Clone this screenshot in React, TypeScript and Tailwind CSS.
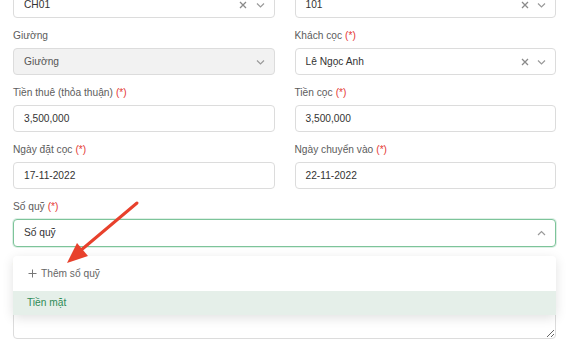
import React from "react";

const font = { fontFamily: '"Liberation Sans", Arial, sans-serif' };

function Chevron({ up = false }: { up?: boolean }) {
  return (
    <svg width="9" height="6" viewBox="0 0 9 6" className="text-[#9a9a9a]">
      <path
        d={up ? "M1 5 L4.5 1.5 L8 5" : "M1 1.5 L4.5 5 L8 1.5"}
        fill="none"
        stroke="currentColor"
        strokeWidth="1.2"
      />
    </svg>
  );
}

function Clear() {
  return (
    <svg width="8" height="8" viewBox="0 0 8 8" className="text-[#8a8a8a]">
      <path d="M1 1 L7 7 M7 1 L1 7" stroke="currentColor" strokeWidth="1.3" />
    </svg>
  );
}

function Label({ text, required }: { text: string; required?: boolean }) {
  return (
    <div className="mb-[5px] h-[14px] text-[10.2px] leading-[14px] text-[#5c5c5c]">
      {text}
      {required && <span className="ml-[3px] text-[#e53935]">(*)</span>}
    </div>
  );
}

function Select({
  value,
  clearable,
  disabled,
}: {
  value: string;
  clearable?: boolean;
  disabled?: boolean;
}) {
  return (
    <div
      className={`flex h-[27px] items-center rounded-[4px] border border-[#dcdcdc] pl-[10px] pr-[5px] text-[10.2px] ${
        disabled ? "bg-[#f2f2f2] text-[#555]" : "bg-white text-[#333]"
      }`}
    >
      <span className="flex-1">{value}</span>
      {clearable && (
        <span className="flex w-[17px] justify-center">
          <Clear />
        </span>
      )}
      <span className="flex w-[17px] justify-center">
        <Chevron />
      </span>
    </div>
  );
}

function Input({ value }: { value: string }) {
  return (
    <div className="flex h-[27px] items-center rounded-[4px] border border-[#dcdcdc] bg-white pl-[10px] text-[10.2px] text-[#333]">
      {value}
    </div>
  );
}

export default function App() {
  return (
    <div className="relative h-[340px] w-[570px] overflow-hidden bg-white" style={font}>
      <div className="-mt-[9px] px-[13px] pr-[14px]">
        <div className="grid grid-cols-2 gap-x-[20px] gap-y-[11px]">
          <div>
            <Select value="CH01" clearable />
          </div>
          <div>
            <Select value="101" clearable />
          </div>
          <div>
            <Label text="Giường" />
            <Select value="Giường" disabled />
          </div>
          <div>
            <Label text="Khách cọc" required />
            <Select value="Lê Ngọc Anh" clearable />
          </div>
          <div>
            <Label text="Tiền thuê (thỏa thuận)" required />
            <Input value="3,500,000" />
          </div>
          <div>
            <Label text="Tiền cọc" required />
            <Input value="3,500,000" />
          </div>
          <div>
            <Label text="Ngày đặt cọc" required />
            <Input value="17-11-2022" />
          </div>
          <div>
            <Label text="Ngày chuyển vào" required />
            <Input value="22-11-2022" />
          </div>
          <div className="relative col-span-2">
            <Label text="Số quỹ" required />
            <div className="flex h-[28px] items-center rounded-[4px] border border-[#7dc49a] bg-white pl-[10px] pr-[5px] text-[10.2px] text-[#333] shadow-[0_0_0_1px_rgba(125,196,154,0.25)]">
              <span className="flex-1">Số quỹ</span>
              <span className="flex w-[17px] justify-center">
                <Chevron up />
              </span>
            </div>
            <div className="absolute left-0 right-0 top-[56px] z-10 rounded-[4px] bg-white shadow-[0_3px_12px_rgba(0,0,0,0.12)]">
              <div className="flex h-[35px] items-center gap-[4px] pl-[15px] text-[10.2px] text-[#666]">
                <svg width="9" height="9" viewBox="0 0 9 9" className="text-[#777]">
                  <path d="M4.5 0.5 V8.5 M0.5 4.5 H8.5" stroke="currentColor" strokeWidth="1" />
                </svg>
                <span>Thêm sổ quỹ</span>
              </div>
              <div className="flex h-[24px] items-center bg-[#e5efe9] pl-[14px] text-[10.2px] text-[#2e8b57]">
                Tiền mặt
              </div>
            </div>
          </div>
          <div className="col-span-2">
            <Label text="Ghi chú" />
            <textarea className="block h-[62px] w-full rounded-[4px] border border-[#dcdcdc] bg-white" />
          </div>
        </div>
      </div>
      <svg
        className="pointer-events-none absolute left-0 top-0 z-20"
        width="570"
        height="340"
        viewBox="0 0 570 340"
      >
        <line x1="137" y1="203" x2="80" y2="251" stroke="#e8412c" strokeWidth="3" strokeLinecap="round" />
        <polygon points="67,263 88,256 77,243" fill="#e8412c" />
      </svg>
    </div>
  );
}
